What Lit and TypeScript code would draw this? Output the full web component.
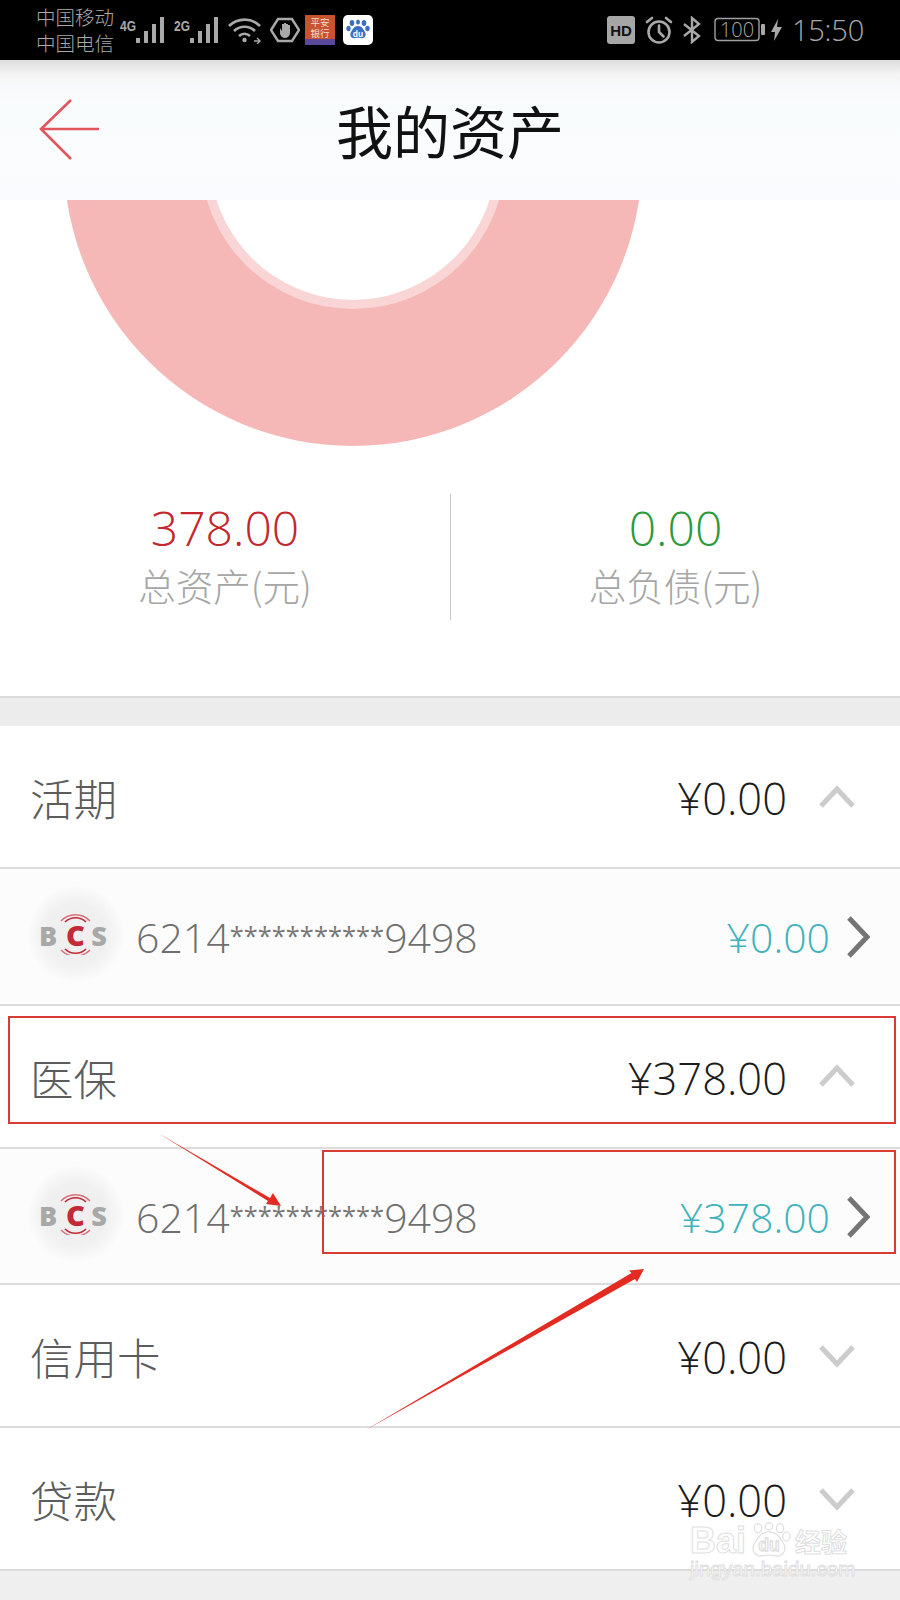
import { LitElement, html, css, svg } from "lit";
import { customElement } from "lit/decorators.js";

type Row =
  | { kind: "group"; label: string; amount: string; open: boolean }
  | { kind: "account"; amount: string };

const ROWS: Row[] = [
  { kind: "group", label: "活期", amount: "¥0.00", open: true },
  { kind: "account", amount: "¥0.00" },
  { kind: "group", label: "医保", amount: "¥378.00", open: true },
  { kind: "account", amount: "¥378.00" },
  { kind: "group", label: "信用卡", amount: "¥0.00", open: false },
  { kind: "group", label: "贷款", amount: "¥0.00", open: false },
];

const signal = () => html`<svg class="signal" width="31" height="28" viewBox="0 0 31 28">
  <g fill="#a9a9a9">
    <rect x="1" y="22" width="4" height="5"></rect>
    <rect x="9" y="15" width="4" height="12"></rect>
    <rect x="17" y="8" width="4" height="19"></rect>
    <rect x="25" y="1" width="4" height="26"></rect>
  </g>
</svg>`;

@customElement("app-root")
export class AppRoot extends LitElement {
  static styles = css`
    :host {
      display: block;
      width: 900px;
      height: 1600px;
      position: relative;
      overflow: hidden;
      background: #fff;
      font-family: "Open Sans", "Noto Sans CJK SC", sans-serif;
    }
    .status {
      height: 60px;
      background: #000;
      display: flex;
      align-items: center;
      padding: 0 36px;
      color: #a9a9a9;
    }
    .carrier {
      font-family: "Noto Sans CJK SC", sans-serif;
      font-size: 19.5px;
      line-height: 26px;
      width: 84px;
      font-weight: 300;
    }
    .net {
      font-family: "Liberation Sans", sans-serif;
      font-size: 15px;
      font-weight: 700;
      align-self: flex-start;
      margin-top: 13px;
      transform: scaleX(0.8);
      transform-origin: left;
      width: 15px;
    }
    .signal { margin-right: 8px; }
    .icon { flex: none; }
    .status-left { display: flex; align-items: center; flex: 1; }
    .status-right { display: flex; align-items: center; }
    .wifi { margin-left: 0; }
    .hand { margin-left: 8px; }
    .bank { margin-left: 5px; }
    .paw { margin-left: 8px; }
    .alarm { margin-left: 10px; }
    .bt { margin-left: 10px; }
    .battery { margin-left: 13px; }
    .bolt { margin-left: 5px; }
    .time { font-size: 29px; font-weight: 300; margin-left: 10px; line-height: 32px; letter-spacing: -0.2px; }

    .header {
      height: 140px;
      background: linear-gradient(#dddddd 0, #f3f3f4 14px, #f8f9fa 28px, #f9fcfd 50px, #fafbfe 100%);
      display: flex;
      align-items: center;
      justify-content: center;
      position: relative;
    }
    .back { position: absolute; left: 39px; top: 39px; }
    .title {
      font-family: "Noto Sans CJK SC", sans-serif;
      font-size: 57px;
      font-weight: 400;
      color: #111;
      line-height: 60px;
      margin-top: -2px;
    }

    .summary {
      height: 496px;
      border-bottom: 2px solid #d9d9d9;
    }
    .donut { display: block; }
    .stats {
      display: grid;
      grid-template-columns: 450px 1fr;
      margin-top: 48px;
      height: 126px;
    }
    .stat { text-align: center; }
    .stat + .stat { border-left: 1px solid #c8c8c8; }
    .num { font-size: 48px; line-height: 68px; font-weight: 300; }
    .num.red { color: #c3262c; }
    .num.green { color: #2c9a3c; }
    .cap {
      font-family: "Noto Sans CJK SC", sans-serif;
      font-size: 37.5px;
      font-weight: 300;
      line-height: 44px;
      margin-top: 1px;
      color: #a6a6a6;
    }
    .band { height: 28px; background: #ececec; }

    .row {
      display: flex;
      align-items: center;
      box-sizing: border-box;
      border-bottom: 2px solid #dcdcdc;
      background: #fff;
    }
    .group { height: 143px; padding: 0 45px 0 30px; }
    .group:last-of-type { border-bottom: none; height: 141px; }
    .group .label {
      flex: 1;
      font-family: "Noto Sans CJK SC", sans-serif;
      font-size: 43.5px;
      font-weight: 300;
      color: #5c5c5c;
      margin-top: 2px;
    }
    .group .amount {
      font-size: 43.5px;
      font-weight: 300;
      color: #1c1c1c;
      margin-top: 4px;
      margin-right: 32px;
    }
    .account { height: 136.5px; padding: 0 30px 0 30px; background: #fcfcfc; }
    .logo {
      width: 96px;
      height: 96px;
      margin-left: -2px;
      margin-right: -2px;
      border-radius: 50%;
      background: radial-gradient(circle, #eeeeee 0, #f0f0f0 45%, #f6f6f6 60%, #fcfcfc 72%);
      display: flex;
      align-items: center;
      justify-content: center;
      flex: none;
      margin-top: -4px;
    }
    .number {
      flex: 1;
      margin-left: 14px;
      font-size: 41px;
      font-weight: 300;
      color: #6e6e6e;
      white-space: nowrap;
      margin-top: 2px;
    }
    .stars { font-size: 25.5px; vertical-align: 8px; font-weight: 400; color: #777; }
    .account .amount {
      font-size: 41px;
      font-weight: 300;
      color: #3fb3bb;
      margin-right: 16px;
      margin-top: 2px;
    }
    .chev { margin-top: 2px; }
    .foot { height: 31px; background: #efefef; }

    .overlay { position: absolute; left: 0; top: 0; pointer-events: none; }
    .mark {
      position: absolute;
      left: 690px;
      top: 1522px;
      color: #fff;
      -webkit-text-stroke: 1px #e0e0e0;
      font-family: "Liberation Sans", sans-serif;
      pointer-events: none;
    }
    .mark-top { display: flex; align-items: center; font-size: 36px; font-weight: 700; line-height: 38px; }
    .mark-cn { font-family: "Noto Sans CJK SC", sans-serif; font-size: 26px; margin-left: 3px; }
    .mark-url { font-size: 20.5px; line-height: 24px; font-weight: 400; margin-top: -3px; }
  `;

  private renderStatus() {
    return html`<div class="status">
      <div class="status-left">
        <div class="carrier">中国移动<br />中国电信</div>
        <span class="net">4G</span>
        ${signal()}
        <span class="net">2G</span>
        ${signal()}
        <svg class="icon wifi" width="34" height="28" viewBox="0 0 34 28" fill="none" stroke="#a9a9a9" stroke-width="2.6">
          <path d="M1 10 A22 22 0 0 1 32 10"></path>
          <path d="M6 15 A15 15 0 0 1 27 15"></path>
          <path d="M11 20 A8 8 0 0 1 22 20"></path>
          <circle cx="16.5" cy="24" r="2.2" fill="#a9a9a9" stroke="none"></circle>
          <path d="M26 25h6M29 22l3 3-3 3" stroke-width="1.4"></path>
        </svg>
        <svg class="icon hand" width="30" height="26" viewBox="0 0 30 26">
          <path d="M8 2h14l7 11-7 11H8L1 13z" fill="none" stroke="#a9a9a9" stroke-width="2.4"></path>
          <path d="M10 11v5c0 3 3 5 5 5s5-2 5-5V8h-2v5-6h-2v6-7h-2v7-6h-2v7z" fill="#a9a9a9"></path>
        </svg>
        <svg class="icon bank" width="30" height="30" viewBox="0 0 30 30">
          <rect width="30" height="24" fill="#c9532f"></rect>
          <rect y="24" width="30" height="6" fill="#5b4a9c"></rect>
          <text x="15" y="11" font-size="9.5" text-anchor="middle" fill="#f6dcc8" font-family="Noto Sans CJK SC">平安</text>
          <text x="15" y="22" font-size="9.5" text-anchor="middle" fill="#f6dcc8" font-family="Noto Sans CJK SC">银行</text>
        </svg>
        <svg class="icon paw" width="30" height="30" viewBox="0 0 30 30">
          <rect width="30" height="30" rx="5" fill="#fff"></rect>
          <g fill="#3a6fc4">
            <ellipse cx="9" cy="8" rx="2.3" ry="3"></ellipse>
            <ellipse cx="21" cy="8" rx="2.3" ry="3"></ellipse>
            <ellipse cx="5.5" cy="13.5" rx="2.2" ry="2.8"></ellipse>
            <ellipse cx="24.5" cy="13.5" rx="2.2" ry="2.8"></ellipse>
            <ellipse cx="15" cy="7" rx="2" ry="2.6"></ellipse>
            <path d="M15 11c4 0 5 3 7 6 2 4-1 7-4 6-2-.5-4-.5-6 0-3 1-6-2-4-6 2-3 3-6 7-6z"></path>
          </g>
          <text x="15" y="22" font-size="8.5" font-weight="700" text-anchor="middle" fill="#fff" font-family="Liberation Sans">du</text>
        </svg>
      </div>
      <div class="status-right">
        <svg class="icon" width="28" height="28" viewBox="0 0 28 28">
          <rect width="28" height="28" rx="3" fill="#a6a6a6"></rect>
          <text x="14" y="19.5" font-size="15" font-weight="700" text-anchor="middle" fill="#111" font-family="Liberation Sans">HD</text>
        </svg>
        <svg class="icon alarm" width="28" height="28" viewBox="0 0 28 28" fill="none" stroke="#a9a9a9" stroke-width="2.6">
          <circle cx="14" cy="16" r="10.5"></circle>
          <path d="M14 9.5V16l4.5 4.5M2 6l5-4M26 6l-5-4" stroke-linecap="round"></path>
        </svg>
        <svg class="icon bt" width="18" height="28" viewBox="0 0 18 28" fill="none" stroke="#a9a9a9" stroke-width="2.4">
          <path d="M1 8l15 12-7 6V2l7 6L1 20"></path>
        </svg>
        <svg class="icon battery" width="52" height="26" viewBox="0 0 52 26">
          <rect x="1" y="1.5" width="44" height="22" rx="3" fill="none" stroke="#a0a0a0" stroke-width="1.4"></rect>
          <rect x="47" y="7" width="4" height="11" rx="1" fill="#a9a9a9"></rect>
          <text x="23" y="20" font-size="20" font-weight="300" text-anchor="middle" fill="#a9a9a9" font-family="Open Sans">100</text>
        </svg>
        <svg class="icon bolt" width="11" height="24" viewBox="0 0 11 24">
          <path d="M7 1L0 14h4l-1 9 8-14H6z" fill="#a9a9a9"></path>
        </svg>
        <span class="time">15:50</span>
      </div>
    </div>`;
  }

  private renderDonut() {
    // the circle centre lies above the cut, behind the header
    return html`<svg class="donut" width="900" height="246" viewBox="0 200 900 246">
      <circle cx="353" cy="156.7" r="289.3" fill="#f5b8b7"></circle>
      <circle cx="353" cy="156.7" r="152.3" fill="#f9d6d5"></circle>
      <circle cx="353" cy="156.7" r="143.2" fill="#fff"></circle>
    </svg>`;
  }

  private renderLogo() {
    return html`<div class="logo">
      <svg width="72" height="42" viewBox="0 0 72 42">
        <text x="-1" y="33" font-size="27" font-weight="800" fill="#a8a8a8" font-family="Open Sans">B</text>
        <text x="35.5" y="33" font-size="29" font-weight="800" text-anchor="middle" fill="#c22a37" font-family="Open Sans">C</text>
        <text x="59" y="33" font-size="27" font-weight="800" text-anchor="middle" fill="#a8a8a8" font-family="Open Sans">S</text>
        <path d="M25 9a15 15 0 0 1 21 0M25 36a15 15 0 0 0 21 0" fill="none" stroke="#c22a37" stroke-width="1.6"></path>
        <path d="M21 8a20 20 0 0 1 29 0M21 37a20 20 0 0 0 29 0" fill="none" stroke="#d9707a" stroke-width="1.3"></path>
      </svg>
    </div>`;
  }

  private renderRow(row: Row) {
    if (row.kind === "account") {
      return html`<div class="row account">
        ${this.renderLogo()}
        <div class="number">6214<span class="stars">***********</span>9498</div>
        <div class="amount">${row.amount}</div>
        <svg class="chev" width="24" height="42" viewBox="0 0 24 42" fill="none" stroke="#757575" stroke-width="5">
          <path d="M3 2l18 19L3 40"></path>
        </svg>
      </div>`;
    }
    return html`<div class="row group">
      <div class="label">${row.label}</div>
      <div class="amount">${row.amount}</div>
      <svg width="36" height="24" viewBox="0 0 36 24" fill="none" stroke="#cccccc" stroke-width="5">
        <path d=${row.open ? "M2 21L18 4l16 17" : "M2 3l16 17L34 3"}></path>
      </svg>
    </div>`;
  }

  private renderAnnotations() {
    return html`<svg class="overlay" width="900" height="1600" viewBox="0 0 900 1600">
      ${svg`
        <rect x="9" y="1017" width="886" height="106" fill="none" stroke="#d83a36" stroke-width="2"></rect>
        <rect x="323" y="1151" width="572" height="102" fill="none" stroke="#d83a36" stroke-width="2"></rect>
        <path d="M158 1133L270 1198L273 1193L281 1206L266 1204L268 1201z" fill="#e32b22"></path>
        <path d="M364 1431L631.5 1273L629 1270.5L644 1269L637 1282L635 1279z" fill="#e32b22"></path>
      `}
    </svg>`;
  }

  render() {
    return html`
      ${this.renderStatus()}
      <div class="header">
        <svg class="back" width="62" height="62" viewBox="0 0 62 62" fill="none" stroke="#e0565c" stroke-width="2.6">
          <path d="M60 30H2M32 1L2 30l30 30"></path>
        </svg>
        <div class="title">我的资产</div>
      </div>
      <div class="summary">
        ${this.renderDonut()}
        <div class="stats">
          <div class="stat">
            <div class="num red">378.00</div>
            <div class="cap">总资产(元)</div>
          </div>
          <div class="stat">
            <div class="num green">0.00</div>
            <div class="cap">总负债(元)</div>
          </div>
        </div>
      </div>
      <div class="band"></div>
      ${ROWS.map((r) => this.renderRow(r))}
      <div class="foot"></div>
      ${this.renderAnnotations()}
      <div class="mark">
        <div class="mark-top">
          <span>Bai</span>
          <svg width="46" height="38" viewBox="0 0 50 40" fill="#fff" stroke="#e0e0e0" stroke-width="1.4">
            <ellipse cx="13" cy="6" rx="4" ry="5"></ellipse>
            <ellipse cx="25" cy="4" rx="4" ry="4"></ellipse>
            <ellipse cx="37" cy="6" rx="4" ry="5"></ellipse>
            <ellipse cx="44" cy="15" rx="4" ry="5"></ellipse>
            <path d="M25 10c9 0 12 7 16 13 4 8-2 15-10 13-4-1-8-1-12 0-8 2-14-5-10-13 4-6 7-13 16-13z"></path>
            <text x="25" y="31" font-size="19" font-family="Liberation Sans" text-anchor="middle">du</text>
          </svg>
          <span class="mark-cn">经验</span>
        </div>
        <div class="mark-url">jingyan.baidu.com</div>
      </div>
    `;
  }
}
